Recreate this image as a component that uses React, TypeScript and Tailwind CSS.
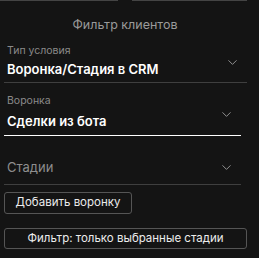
import { ChevronDown } from 'lucide-react'

function Field({ label, value, active, wide }: { label: string; value: string; active?: boolean; wide?: boolean }) {
  return (
    <div
      className={`${wide ? 'mr-[12px] pb-[4px]' : 'mr-[18px] pb-[5px]'} border-b ${active ? 'border-white' : 'border-[#3f3f3f]'}`}
    >
      <div className="flex items-end justify-between pl-[3px] pr-[7px]">
        <div className="flex flex-col">
          <span className="text-[10.5px] leading-[14px] text-[#8a8a8a]">{label}</span>
          <span className={`${wide ? 'mt-[2px]' : 'mt-[4px]'} text-[13px] font-semibold leading-[18px] text-white`}>{value}</span>
        </div>
        <ChevronDown size={15} strokeWidth={1.4} className="mb-[8px] text-[#a0a0a0]" />
      </div>
    </div>
  )
}

export default function App() {
  return (
    <div className="h-[258px] w-[259px] overflow-hidden bg-[#141414] font-['Inter',sans-serif]">
      <div className="flex gap-[14px] pr-[12px]">
        <div className="h-px w-[118px] bg-[#444]" />
        <div className="h-px flex-1 bg-[#444]" />
      </div>
      <div className="mt-[16px] pr-[9px] text-center text-[12.5px] leading-[16px] text-[#9a9a9a]">Фильтр клиентов</div>
      <div className="ml-[4px] mt-[11px] flex flex-col">
        <Field label="Тип условия" value="Воронка/Стадия в CRM" wide />
        <div className="mt-[11px]">
          <Field label="Воронка" value="Сделки из бота" active />
        </div>
        <div className="mt-[21px] mr-[18px] border-b border-[#3f3f3f]">
          <div className="flex items-center justify-between pb-[7px] pl-[3px] pr-[7px]">
            <span className="text-[13px] leading-[20px] text-[#8e8e8e]">Стадии</span>
            <ChevronDown size={15} strokeWidth={1.4} className="text-[#a0a0a0]" />
          </div>
        </div>
        <button className="mt-[7px] h-[22px] w-[128px] rounded-[3px] border border-[#555] text-[11.5px] text-[#ececec]">
          Добавить воронку
        </button>
        <button className="mt-[14px] mr-[12px] h-[21px] rounded-[3px] border border-[#555] text-[11.5px] text-[#ececec]">
          Фильтр: только выбранные стадии
        </button>
      </div>
    </div>
  )
}
